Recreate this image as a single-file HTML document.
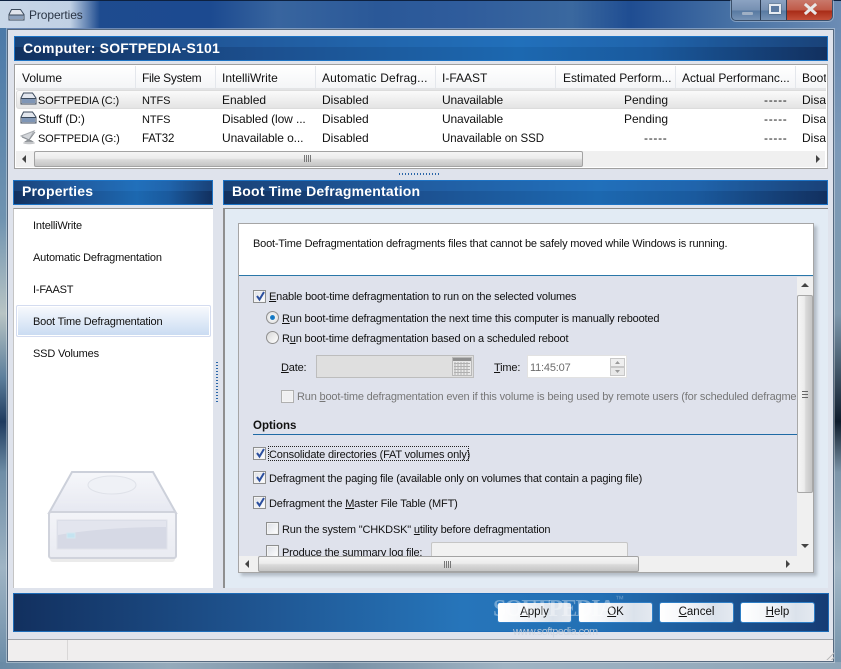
<!DOCTYPE html>
<html><head><meta charset="utf-8"><style>
html,body{margin:0;padding:0;width:841px;height:669px;overflow:hidden;background:#1d4a8f}
*{box-sizing:border-box}
.a{position:absolute}
.t{position:absolute;white-space:nowrap;font:11px/14px "Liberation Sans",sans-serif;letter-spacing:-.18px;color:#111;margin-top:1px}
.l{position:absolute;white-space:nowrap;font:12px/14px "Liberation Sans",sans-serif;color:#111}
.bar{position:absolute;background:linear-gradient(90deg,#12315f 0,#1c4f8e 30%,#1c68b0 62%,#1a5a9e 78%,#12305f 100%);border:1px solid #1d73c4}
.bar i{position:absolute;left:0;right:0;top:0;height:10px;background:rgba(60,150,240,.18)}
.bar b{position:absolute;font:bold 14px/20px "Liberation Sans",sans-serif;color:#fff;white-space:nowrap;letter-spacing:.2px;top:1px}
.cb{position:absolute;width:13px;height:13px;border:1px solid #8e8f8f;background:linear-gradient(135deg,#dcdfe6,#fff);box-shadow:inset 0 0 0 1px #f4f4f4}
.cb svg{position:absolute;left:1px;top:0}
.rd{position:absolute;width:13px;height:13px;border-radius:50%;border:1px solid #8f8f8f;background:linear-gradient(135deg,#d8d8d8,#fff)}
.btn{position:absolute;top:602px;width:75px;height:21px;border:1px solid #2f7fc6;border-radius:3px;background:linear-gradient(90deg,#fff 0,#f4f6f9 35%,#dbe2eb 75%,#e4e9f0 100%);text-align:center;font:11.5px/19px "Liberation Sans",sans-serif;color:#111}
.g{color:#777}
u{text-decoration:underline}
.hs{position:absolute;top:66px;width:1px;height:22px;background:#e4e7ec}
.sb{position:absolute;background:#f0f0f0}
.th{position:absolute;border:1px solid #a3a3a3;border-radius:2px;background:linear-gradient(180deg,#f5f5f5 0,#ececec 45%,#dadada 55%,#c4c4c4 100%)}
.thv{position:absolute;border:1px solid #a8a8a8;border-radius:2px;background:linear-gradient(90deg,#f5f5f5 0,#ececec 45%,#dadada 55%,#c4c4c4 100%)}
</style></head><body>
<!-- frame -->
<div class="a" style="left:0;top:0;width:841px;height:669px;background:linear-gradient(90deg,#1f4c8e 0,#1c4a90 25%,#38659f 33%,#2a5898 45%,#2f5c9c 55%,#3a689f 68%,#1f4d92 75%,#4a74a6 88%,#6c8cb4 100%);border-top:1px solid #0d2140"></div>
<div class="a" style="left:0;top:1px;width:100px;height:27px;background:linear-gradient(90deg,rgba(215,227,240,.92) 0,rgba(215,227,240,.88) 70%,rgba(215,227,240,0) 100%)"></div>
<div class="a" style="left:0;top:28px;width:7px;height:635px;background:linear-gradient(180deg,#4b79a8 0,#6f93b0 30%,#b8c4c4 45%,#5d7f9c 55%,#1f3b5f 62%,#6e8da6 70%,#9fb4c4 85%,#6d8da8 100%)"></div>
<div class="a" style="left:834px;top:28px;width:7px;height:635px;background:linear-gradient(180deg,#6c8cb4 0,#7d9ab8 20%,#7f99ad 45%,#0e1c2c 62%,#7d96aa 70%,#a3b7c6 85%,#7693ab 100%)"></div>
<div class="a" style="left:0;top:662px;width:841px;height:7px;background:linear-gradient(90deg,#6a8aa5,#95aabb 20%,#7890a5 40%,#a0b4c4 60%,#8ea5b8 100%)"></div>
<!-- title -->
<svg class="a" style="left:8px;top:9px" width="17" height="12" viewBox="0 0 17 12"><path d="M3.500.5h9l3.500 5v5.500H1V5.500z" fill="#dfe4ec" stroke="#3b4a5c"/><rect x="2" y="6" width="13" height="4" fill="#8ba0bc"/><path d="M1 6h15" stroke="#3b4a5c"/></svg>
<div class="l" style="left:29px;top:8px;color:#2a3545;letter-spacing:-.1px">Properties</div>
<!-- window buttons -->
<div class="a" style="left:731px;top:0;width:102px;height:21px;border:1px solid #3a4f6a;border-top:0;border-radius:0 0 5px 5px;overflow:hidden;box-shadow:0 0 0 1px rgba(255,255,255,.3)">
 <div class="a" style="left:0;top:0;width:29px;height:20px;background:linear-gradient(180deg,#8ba3c2 0,#7690b2 50%,#587aa2 55%,#7793b5 100%);border-right:1px solid #2c3e56"></div>
 <div class="a" style="left:29px;top:0;width:26px;height:20px;background:linear-gradient(180deg,#8ba3c2 0,#7690b2 50%,#587aa2 55%,#7793b5 100%);border-right:1px solid #2c3e56"></div>
 <div class="a" style="left:55px;top:0;width:47px;height:20px;background:linear-gradient(180deg,#c9796b 0,#c05a48 50%,#a92c17 55%,#c4503a 100%)"></div>
 <div class="a" style="left:10px;top:12px;width:11px;height:3px;background:#9fb0c5;border-radius:1px"></div>
 <div class="a" style="left:37px;top:4px;width:12px;height:10px;border:2px solid #e6ebf1;background:#5c7aa0;box-shadow:0 0 1px #233"></div>
 <svg class="a" style="left:71px;top:3px" width="15" height="12" viewBox="0 0 15 12"><path d="M3 2l9 8M12 2l-9 8" stroke="#e8e8e8" stroke-width="3" stroke-linecap="square"/></svg>
</div>
<!-- client -->
<div class="a" style="left:7px;top:29px;width:827px;height:633px;background:#dfe3ec;border:1px solid #56697f;box-shadow:0 0 0 1px rgba(255,255,255,.35)"></div>
<!-- computer bar -->
<div class="bar" style="left:14px;top:36px;width:814px;height:25px"><i></i><b style="left:8px">Computer: SOFTPEDIA-S101</b></div>
<!-- list -->
<div class="a" style="left:14px;top:64px;width:814px;height:105px;background:#fff;border:1px solid #a0a0a0;border-right-color:#b5b5b5"></div>
<div class="a" style="left:16px;top:66px;width:810px;height:22px;background:linear-gradient(180deg,#fff,#f4f5f7)"></div>
<div class="a" style="left:16px;top:88px;width:810px;height:2px;background:#e3e4e6"></div>
<div class="hs" style="left:135px"></div><div class="hs" style="left:215px"></div><div class="hs" style="left:315px"></div><div class="hs" style="left:435px"></div><div class="hs" style="left:555px"></div><div class="hs" style="left:675px"></div><div class="hs" style="left:795px"></div>
<div class="a" style="left:16px;top:90px;width:810px;height:19px;background:linear-gradient(180deg,#fafafa,#e4e4e4);border:1px solid #dcdcdc;border-right:0;border-radius:3px 0 0 3px"></div>
<div class="l" style="left:22px;top:71px">Volume</div>
<div class="l" style="left:142px;top:71px;letter-spacing:-.3px">File System</div>
<div class="l" style="left:222px;top:71px">IntelliWrite</div>
<div class="l" style="left:322px;top:71px;letter-spacing:.15px">Automatic Defrag...</div>
<div class="l" style="left:442px;top:71px">I-FAAST</div>
<div class="l" style="left:563px;top:71px;letter-spacing:-.05px">Estimated Perform...</div>
<div class="l" style="left:682px;top:71px;letter-spacing:-.05px">Actual Performanc...</div>
<div class="a" style="left:802px;top:71px;width:24px;height:14px;overflow:hidden"><div class="l" style="left:0;top:0">Boot</div></div>
<svg class="a" style="left:20px;top:92px" width="17" height="13" viewBox="0 0 17 13"><path d="M3.500 1h9l3.500 5v6H1V6z" fill="#e3e7ee" stroke="#3b4a5c"/><rect x="2" y="7" width="13" height="4" fill="#7f96b6"/><path d="M1 6.500h15" stroke="#3b4a5c"/></svg>
<svg class="a" style="left:20px;top:111px" width="17" height="13" viewBox="0 0 17 13"><path d="M3.500 1h9l3.500 5v6H1V6z" fill="#e3e7ee" stroke="#3b4a5c"/><rect x="2" y="7" width="13" height="4" fill="#7f96b6"/><path d="M1 6.500h15" stroke="#3b4a5c"/></svg>
<svg class="a" style="left:20px;top:130px" width="17" height="15" viewBox="0 0 17 15"><path d="M1 6l13-5-5 9z" fill="#d3d6da" stroke="#a9adb2"/><path d="M2 7l7 3 6-8" fill="none" stroke="#8a8f95"/><path d="M4 12h10l-3-2H7z" fill="#8d9196"/><ellipse cx="9" cy="13" rx="6" ry="1.200" fill="#c4c6c9"/></svg>
<!-- rows -->
<div class="l" style="left:38px;top:94px;font-size:11px;letter-spacing:-.15px">SOFTPEDIA (C:)</div><div class="l" style="left:142px;top:94px;font-size:11px;letter-spacing:-.1px">NTFS</div><div class="l" style="left:222px;top:93px">Enabled</div><div class="l" style="left:322px;top:93px">Disabled</div><div class="l" style="left:442px;top:93px;letter-spacing:-.15px">Unavailable</div><div class="l" style="left:624px;top:93px">Pending</div><div class="l" style="left:764px;top:93px;letter-spacing:.7px">-----</div>
<div class="l" style="left:38px;top:112px;letter-spacing:-.1px">Stuff (D:)</div><div class="l" style="left:142px;top:113px;font-size:11px;letter-spacing:-.1px">NTFS</div><div class="l" style="left:222px;top:112px;letter-spacing:-.1px">Disabled (low ...</div><div class="l" style="left:322px;top:112px">Disabled</div><div class="l" style="left:442px;top:112px;letter-spacing:-.15px">Unavailable</div><div class="l" style="left:624px;top:112px">Pending</div><div class="l" style="left:764px;top:112px;letter-spacing:.7px">-----</div>
<div class="l" style="left:38px;top:132px;font-size:11px;letter-spacing:-.15px">SOFTPEDIA (G:)</div><div class="l" style="left:142px;top:132px;font-size:11.5px;letter-spacing:-.15px">FAT32</div><div class="l" style="left:222px;top:131px;letter-spacing:-.08px">Unavailable o...</div><div class="l" style="left:322px;top:131px">Disabled</div><div class="l" style="left:442px;top:132px;font-size:11.5px;letter-spacing:-.05px">Unavailable on SSD</div><div class="l" style="left:644px;top:131px;letter-spacing:.7px">-----</div><div class="l" style="left:764px;top:131px;letter-spacing:.7px">-----</div>
<div class="a" style="left:802px;top:93px;width:24px;height:60px;overflow:hidden"><div class="l" style="left:0;top:0">Disal</div><div class="l" style="left:0;top:19px">Disal</div><div class="l" style="left:0;top:38px">Disal</div></div>
<!-- list hscroll -->
<div class="sb" style="left:16px;top:151px;width:809px;height:16px"></div>
<div class="th" style="left:34px;top:151px;width:549px;height:16px"></div>
<div class="a" style="left:304px;top:155px;width:7px;height:7px;background:repeating-linear-gradient(90deg,#777 0,#777 1px,transparent 1px,transparent 2px)"></div>
<svg class="a" style="left:21px;top:155px" width="6" height="8"><path d="M5 0v8L1 4z" fill="#444"/></svg>
<svg class="a" style="left:815px;top:155px" width="6" height="8"><path d="M1 0v8l4-4z" fill="#444"/></svg>
<!-- h splitter dots -->
<div class="a" style="left:399px;top:173px;width:42px;height:2px;background:repeating-linear-gradient(90deg,#2a66a8 0,#2a66a8 1px,transparent 1px,transparent 3px)"></div>
<!-- Headers -->
<div class="bar" style="left:13px;top:180px;width:200px;height:25px"><i></i><b style="left:8px;top:0">Properties</b></div>
<div class="bar" style="left:223px;top:180px;width:605px;height:25px"><i></i><b style="left:8px;top:0">Boot Time Defragmentation</b></div>
<!-- left panel -->
<div class="a" style="left:13px;top:208px;width:200px;height:380px;background:#fff;border-top:1px solid #9a9a9a;border-left:1px solid #c4c4c4"></div>
<div class="a" style="left:16px;top:305px;width:195px;height:32px;border:1px solid #d4dcf0;border-radius:2px;background:linear-gradient(180deg,#f8fafd,#c9dbf2);box-shadow:inset 0 0 0 1px #fff"></div>
<div class="t" style="left:33px;top:218px">IntelliWrite</div>
<div class="t" style="left:33px;top:250px">Automatic Defragmentation</div>
<div class="t" style="left:33px;top:282px">I-FAAST</div>
<div class="t" style="left:33px;top:314px">Boot Time Defragmentation</div>
<div class="t" style="left:33px;top:346px">SSD Volumes</div>
<div class="a" style="left:216px;top:362px;width:2px;height:42px;background:repeating-linear-gradient(180deg,#2a66a8 0,#2a66a8 1px,transparent 1px,transparent 3px)"></div>
<!-- big drive -->
<svg class="a" style="left:45px;top:465px" width="135" height="100" viewBox="0 0 135 100">
<defs><linearGradient id="d1" x1="0" y1="0" x2="0" y2="1"><stop offset="0" stop-color="#f6f7fa"/><stop offset="1" stop-color="#e6e8f1"/></linearGradient><linearGradient id="d2" x1="0" y1="0" x2="0" y2="1"><stop offset="0" stop-color="#f3f4f8"/><stop offset="1" stop-color="#e9ebf2"/></linearGradient></defs>
<rect x="5" y="90" width="125" height="7" fill="#e6e6e6" opacity=".8" rx="3"/>
<path d="M27 7H108L131 48H4Z" fill="url(#d1)" stroke="#ccd0da" stroke-width="2"/>
<ellipse cx="67" cy="20" rx="24" ry="9" fill="#eff1f6" stroke="#dfe2e9"/>
<path d="M15 37h105" stroke="#eceef3"/>
<rect x="4" y="47" width="127" height="46" rx="2" fill="url(#d2)" stroke="#d0d3dc" stroke-width="2"/>
<rect x="12" y="55" width="110" height="29" fill="#d6d9e5" stroke="#e0e2ea"/>
<path d="M13 56h108v6c-40 0-80 3-108 8z" fill="#e3e5ee"/>
<rect x="22" y="68" width="8" height="5" fill="#c4e3f0" stroke="#d4e7f0"/>
</svg>
<!-- right panel -->
<div class="a" style="left:223px;top:208px;width:605px;height:380px;background:#e2ebf4;border-top:1px solid #8a8a8a;border-left:2px solid #8f8f8f"></div>
<div class="a" style="left:238px;top:223px;width:576px;height:350px;background:#dfe2ec;border:1px solid #a5a5a5;box-shadow:3px 3px 3px #b4bcc6"></div>
<div class="a" style="left:239px;top:224px;width:574px;height:51px;background:#fff"></div>
<div class="a" style="left:239px;top:275px;width:574px;height:1px;background:#2a77a8"></div>
<div class="t" style="left:253px;top:236px">Boot-Time Defragmentation defragments files that cannot be safely moved while Windows is running.</div>
<!-- scroll content -->
<div class="a" style="left:239px;top:277px;width:558px;height:279px;overflow:hidden"><div class="a" style="left:-239px;top:-277px;width:841px;height:669px">
 <div class="cb" style="left:253px;top:290px"><svg width="11" height="11" viewBox="0 0 11 11"><path d="M2 5l2.500 3.500L9 1" fill="none" stroke="#2c4f9e" stroke-width="2"/></svg></div>
 <div class="t" style="left:269px;top:289px"><u>E</u>nable boot-time defragmentation to run on the selected volumes</div>
 <div class="rd" style="left:266px;top:311px;background:radial-gradient(circle,#0f6fc0 0,#1a7fc8 28%,#f2f2f2 35%,#d8d8d8 100%)"></div>
 <div class="t" style="left:282px;top:311px"><u>R</u>un boot-time defragmentation the next time this computer is manually rebooted</div>
 <div class="rd" style="left:266px;top:331px"></div>
 <div class="t" style="left:282px;top:331px">R<u>u</u>n boot-time defragmentation based on a scheduled reboot</div>
 <div class="t" style="left:281px;top:360px"><u>D</u>ate:</div>
 <div class="a" style="left:316px;top:355px;width:158px;height:23px;background:#dfdfdf;border:1px solid #bdbdbd"></div>
 <svg class="a" style="left:452px;top:357px" width="20" height="19" viewBox="0 0 20 19"><rect width="20" height="19" fill="#e8e8e8"/><rect x=".5" y=".5" width="19" height="18" fill="none" stroke="#b8b8b8"/><rect x="1" y="1" width="18" height="3" fill="#8f8f8f"/><path d="M3 5v13M6 5v13M9 5v13M12 5v13M15 5v13M2 6.500h16M2 9.500h16M2 12.500h16M2 15.500h16" stroke="#b0b0b0"/></svg>
 <div class="t" style="left:494px;top:360px"><u>T</u>ime:</div>
 <div class="a" style="left:527px;top:355px;width:100px;height:23px;background:#fff;border:1px solid #e2e2e2"></div>
 <div class="t g" style="left:530px;top:360px;color:#6c6c6c">11:45:07</div>
 <div class="a" style="left:610px;top:358px;width:15px;height:9px;background:#efefef;border:1px solid #c8c8c8"></div>
 <div class="a" style="left:610px;top:367px;width:15px;height:9px;background:#e8e8e8;border:1px solid #c8c8c8"></div>
 <svg class="a" style="left:614px;top:360px" width="7" height="14"><path d="M3.500 1L6 4H1z" fill="#9a9a9a"/><path d="M1 10h5l-2.500 3z" fill="#9a9a9a"/></svg>
 <div class="cb" style="left:281px;top:390px;border-color:#b0b0b0;background:#f0f0f2"></div>
 <div class="t g" style="left:297px;top:389px">Run <u>b</u>oot-time defragmentation even if this volume is being used by remote users (for scheduled defragmentation only)</div>
 <div class="t" style="left:253px;top:418px;font-weight:bold;font-size:11.5px;letter-spacing:0">Options</div>
 <div class="a" style="left:253px;top:434px;width:544px;height:1px;background:#1f6aa5"></div>
 <div class="cb" style="left:253px;top:447px"><svg width="11" height="11" viewBox="0 0 11 11"><path d="M2 5l2.500 3.500L9 1" fill="none" stroke="#2c4f9e" stroke-width="2"/></svg></div>
 <div class="a" style="left:268px;top:446px;width:201px;height:15px;border:1px dotted #222"></div>
 <div class="t" style="left:269px;top:447px">Consolidate directories (FAT volumes only)</div>
 <div class="cb" style="left:253px;top:471px"><svg width="11" height="11" viewBox="0 0 11 11"><path d="M2 5l2.500 3.500L9 1" fill="none" stroke="#2c4f9e" stroke-width="2"/></svg></div>
 <div class="t" style="left:269px;top:471px">Defragment the paging file (available only on volumes that contain a paging file)</div>
 <div class="cb" style="left:253px;top:496px"><svg width="11" height="11" viewBox="0 0 11 11"><path d="M2 5l2.500 3.500L9 1" fill="none" stroke="#2c4f9e" stroke-width="2"/></svg></div>
 <div class="t" style="left:269px;top:496px">Defragment the <u>M</u>aster File Table (MFT)</div>
 <div class="cb" style="left:266px;top:522px"></div>
 <div class="t" style="left:282px;top:522px">Run the system "CHKDSK" <u>u</u>tility before defragmentation</div>
 <div class="cb" style="left:266px;top:545px"></div>
 <div class="t" style="left:282px;top:545px">Produce the summary log file:</div>
 <div class="a" style="left:431px;top:542px;width:197px;height:30px;background:#f1f1f1;border:1px solid #c6c6c6;border-radius:2px"></div>
</div></div>
<!-- vscroll -->
<div class="sb" style="left:797px;top:277px;width:16px;height:279px"></div>
<div class="thv" style="left:797px;top:295px;width:16px;height:198px"></div>
<div class="a" style="left:802px;top:391px;width:6px;height:7px;background:repeating-linear-gradient(180deg,#666 0,#666 1px,transparent 1px,transparent 3px)"></div>
<svg class="a" style="left:801px;top:283px" width="8" height="5"><path d="M4 0l4 4H0z" fill="#444"/></svg>
<svg class="a" style="left:801px;top:544px" width="8" height="5"><path d="M0 0h8L4 4z" fill="#444"/></svg>
<!-- hscroll -->
<div class="sb" style="left:239px;top:556px;width:574px;height:16px"></div>
<div class="th" style="left:258px;top:556px;width:381px;height:16px"></div>
<div class="a" style="left:444px;top:561px;width:7px;height:7px;background:repeating-linear-gradient(90deg,#777 0,#777 1px,transparent 1px,transparent 2px)"></div>
<svg class="a" style="left:244px;top:560px" width="6" height="8"><path d="M5 0v8L1 4z" fill="#444"/></svg>
<svg class="a" style="left:785px;top:560px" width="6" height="8"><path d="M1 0v8l4-4z" fill="#444"/></svg>
<!-- footer -->
<div class="a" style="left:13px;top:593px;width:816px;height:39px;background:linear-gradient(90deg,#12305f 0,#1f5591 30%,#2675ba 55%,#2370b4 72%,#163c74 100%);border:1px solid #1d6cb8"></div>
<div class="btn" style="left:497px"><u>A</u>pply</div>
<div class="btn" style="left:578px"><u>O</u>K</div>
<div class="btn" style="left:659px"><u>C</u>ancel</div>
<div class="btn" style="left:740px"><u>H</u>elp</div>
<div class="a" style="left:493px;top:597px;font:bold 24px/24px 'Liberation Serif',serif;color:rgba(255,255,255,.36);letter-spacing:-1.8px;white-space:nowrap">SOFTPEDIA</div>
<div class="a" style="left:615px;top:594px;font:9px/10px 'Liberation Sans',sans-serif;color:rgba(255,255,255,.3);white-space:nowrap">™</div>
<div class="a" style="left:513px;top:625px;font:11px/14px 'Liberation Sans',sans-serif;letter-spacing:-.6px;color:rgba(205,210,220,.85);white-space:nowrap">www.softpedia.com</div>
<!-- status -->
<div class="a" style="left:8px;top:639px;width:825px;height:22px;background:#f0eeee;border-top:1px solid #a0a4aa"></div>
<div class="a" style="left:67px;top:640px;width:1px;height:20px;background:#d9d7d7"></div>
<div class="a" style="left:826px;top:652px;width:8px;height:8px;background:repeating-linear-gradient(135deg,#bbb 0,#bbb 1px,transparent 1px,transparent 3px);clip-path:polygon(100% 0,100% 100%,0 100%)"></div>
</body></html>
